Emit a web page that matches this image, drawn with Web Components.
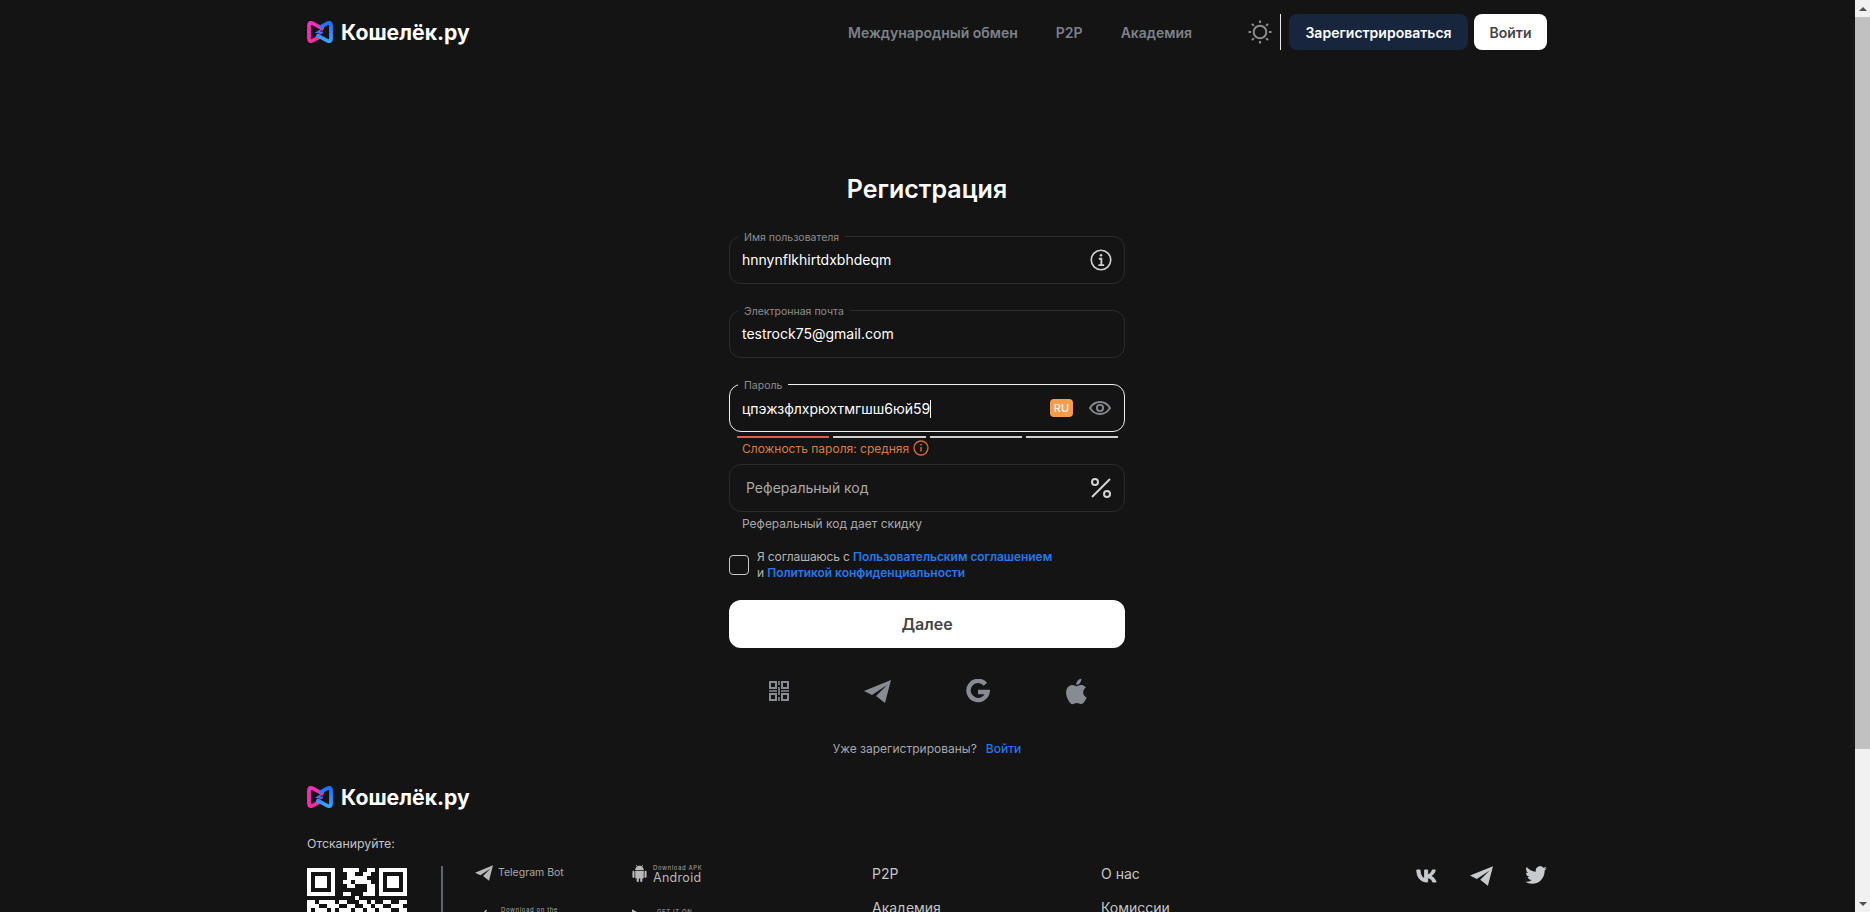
<!DOCTYPE html>
<html lang="ru">
<head>
<meta charset="utf-8">
<title>Кошелёк.ру</title>
<style>
	html, body { margin: 0; height: 100%; background: #141414; }
	body { font-family: Inter, "Noto Sans", sans-serif; color: #fff; overflow: hidden; }
</style>
</head>
<body>
<k-app>
	<k-header></k-header>
	<k-register></k-register>
	<k-footer></k-footer>
</k-app>

<script>
(function() {
	const ICONS = {
		sun: '<svg viewBox="0 0 24 24" fill="none" stroke="currentColor" stroke-width="2"><circle cx="12" cy="12" r="6.3"/><path d="M12 .5v2.6M12 20.9v2.6M.5 12h2.6M20.9 12h2.6M3.9 3.9l1.9 1.9M18.2 18.2l1.9 1.9M3.9 20.1l1.9-1.9M18.2 5.8l1.9-1.9"/></svg>',
		info: '<svg viewBox="0 0 24 24" fill="none" stroke="currentColor" stroke-width="1.8"><circle cx="12" cy="12" r="10.6"/><path d="M9.6 10.6H12.4V17.4M9.2 17.6H15.4" stroke-width="2"/><circle cx="12" cy="6.9" r="1.4" fill="currentColor" stroke="none"/></svg>',
		infoThin: '<svg viewBox="0 0 16 16" fill="none" stroke="currentColor" stroke-width="1.3"><circle cx="8" cy="8" r="7"/><path d="M8 7v4.6" stroke-width="1.4"/><circle cx="8" cy="4.7" r=".9" fill="currentColor" stroke="none"/></svg>',
		eye: '<svg viewBox="0 0 22 14" fill="none" stroke="currentColor" stroke-width="1.9"><path d="M1 7C3.4 3 6.8 1 11 1s7.6 2 10 6c-2.4 4-5.8 6-10 6S3.4 11 1 7z"/><circle cx="11" cy="7" r="3.1"/></svg>',
		percent: '<svg viewBox="0 0 20 20" fill="none" stroke="currentColor" stroke-width="2"><circle cx="4" cy="4" r="3"/><circle cx="16" cy="16" r="3"/><path d="M19 1L1 19"/></svg>',
		qr: '<svg viewBox="0 0 20 20" fill="none" stroke="currentColor" stroke-width="2"><rect x="1" y="1" width="6" height="6"/><rect x="13" y="1" width="6" height="6"/><rect x="1" y="13" width="6" height="6"/><rect x="13" y="13" width="6" height="6"/><path d="M10 0v4M10 6v8M10 16v4M0 10h8M12 10h8" stroke-width="1.6"/></svg>',
		telegram: '<svg viewBox="0 0 27 23" fill="currentColor"><polygon points="0,11 27,0 21,23 12,16 23,5 8,15"/></svg>',
		google: '<svg viewBox="0 0 24 24" fill="none" stroke="currentColor" stroke-width="4.4"><path d="M19.4 5.2A9.6 9.6 0 1 0 21.6 13H12"/></svg>',
		apple: '<svg viewBox="3 1.5 19 21" fill="currentColor"><path d="M18.71 19.5c-.83 1.24-1.71 2.45-3.05 2.47-1.34.03-1.77-.79-3.29-.79-1.53 0-2 .77-3.27.82-1.31.05-2.3-1.32-3.14-2.53C4.25 17 2.94 12.45 4.7 9.39c.87-1.52 2.43-2.48 4.12-2.51 1.28-.02 2.5.87 3.29.87.78 0 2.26-1.07 3.81-.91.65.03 2.47.26 3.64 1.98-.09.06-2.17 1.28-2.15 3.81.03 3.02 2.65 4.03 2.68 4.04-.03.07-.42 1.44-1.38 2.83M13 3.5c.73-.83 1.94-1.46 2.94-1.5.13 1.17-.34 2.35-1.04 3.19-.69.85-1.83 1.51-2.95 1.42-.15-1.15.41-2.35 1.05-3.11z"/></svg>',
		android: '<svg viewBox="2 0 20 24" fill="currentColor"><path d="M6 18c0 .55.45 1 1 1h1v3.5c0 .83.67 1.5 1.5 1.5s1.5-.67 1.5-1.5V19h2v3.5c0 .83.67 1.5 1.5 1.5s1.5-.67 1.5-1.5V19h1c.55 0 1-.45 1-1V8H6v10zM3.5 8C2.67 8 2 8.67 2 9.5v7c0 .83.67 1.5 1.5 1.5S5 17.33 5 16.5v-7C5 8.67 4.33 8 3.5 8zm17 0c-.83 0-1.5.67-1.5 1.5v7c0 .83.67 1.5 1.5 1.5s1.5-.67 1.5-1.5v-7c0-.83-.67-1.5-1.5-1.5zm-4.97-5.84l1.3-1.3c.2-.2.2-.51 0-.71-.2-.2-.51-.2-.71 0l-1.48 1.48C13.85 1.23 12.95 1 12 1c-.96 0-1.86.23-2.66.63L7.85.15c-.2-.2-.51-.2-.71 0-.2.2-.2.51 0 .71l1.31 1.31C6.97 3.26 6 5.01 6 7h12c0-1.99-.97-3.75-2.47-4.84z"/></svg>',
		play: '<svg viewBox="0 0 16 18" fill="currentColor"><polygon points="0,0 16,9 0,18"/></svg>',
		vk: '<svg viewBox="2.5 6 20 12" fill="currentColor" stroke="currentColor" stroke-width=".8"><path d="M12.8 17.5C6.8 17.5 3.3 13.4 3.2 6.5h3c.1 5 2.3 7.2 4.1 7.6V6.5h2.8v4.4c1.8-.2 3.6-2.2 4.2-4.4h2.8c-.5 2.7-2.5 4.7-3.9 5.5 1.4.7 3.7 2.4 4.6 5.5h-3.1c-.7-2.1-2.4-3.7-4.6-3.9v3.9h-.3z"/></svg>',
		twitter: '<svg viewBox="0 2 24 20" fill="currentColor"><path d="M23.953 4.57a10 10 0 01-2.825.775 4.958 4.958 0 002.163-2.723c-.951.555-2.005.959-3.127 1.184a4.92 4.92 0 00-8.384 4.482C7.69 8.095 4.067 6.13 1.64 3.162a4.822 4.822 0 00-.666 2.475c0 1.71.87 3.213 2.188 4.096a4.904 4.904 0 01-2.228-.616v.06a4.923 4.923 0 003.946 4.827 4.996 4.996 0 01-2.212.085 4.936 4.936 0 004.604 3.417 9.867 9.867 0 01-6.102 2.105c-.39 0-.779-.023-1.17-.067a13.995 13.995 0 007.557 2.209c9.053 0 13.998-7.496 13.998-13.985 0-.21 0-.42-.015-.63A9.935 9.935 0 0024 4.59z"/></svg>'
	};

	class KIcon extends HTMLElement {
		connectedCallback() {
			if (this.shadowRoot) return;
			const shadow = this.attachShadow({mode: 'open'});
			const w = this.getAttribute('w') || 20;
			const h = this.getAttribute('h') || w;
			shadow.innerHTML = `<style>
				:host { display: inline-flex; flex: none; width: ${w}px; height: ${h}px; }
				svg { width: 100%; height: 100%; display: block; }
			</style>${ICONS[this.getAttribute('name')] || ''}`;
		}
	}

	class KLogo extends HTMLElement {
		connectedCallback() {
			if (this.shadowRoot) return;
			const shadow = this.attachShadow({mode: 'open'});
			shadow.innerHTML = `<style>
				:host { display: inline-flex; align-items: center; gap: 8px; height: 24px; }
				svg { width: 26px; height: 22px; display: block; }
				span { font-size: 21.2px; font-weight: 700; color: #fff; line-height: 24px; }
			</style>
			<svg viewBox="0 0 26 22" fill="none">
				<defs>
					<linearGradient id="p" x1="0" y1="0" x2="1" y2="1"><stop offset="0" stop-color="#f02fc2"/><stop offset="1" stop-color="#f0308c"/></linearGradient>
					<linearGradient id="b" x1="0" y1="0" x2="0" y2="1"><stop offset="0" stop-color="#1f6fff"/><stop offset="1" stop-color="#38a3ff"/></linearGradient>
				</defs>
				<path d="M16.5 8.2L5.4 2.2Q2 .9 2 4.4V17.6Q2 21.1 5.4 19.8L13 15.6" stroke="url(#p)" stroke-width="3.8"/>
				<path d="M9.5 13.8L20.6 19.8Q24 21.1 24 17.6V4.4Q24 .9 20.6 2.2L13 6.4" stroke="url(#b)" stroke-width="3.8"/>
				<path d="M14.5 8.4L10.2 11.3H15.8L11.5 13.6" stroke="#5b63f5" stroke-width="1.6"/>
			</svg>
			<span>Кошелёк.ру</span>`;
		}
	}

	class KHeader extends HTMLElement {
		connectedCallback() {
			if (this.shadowRoot) return;
			const shadow = this.attachShadow({mode: 'open'});
			shadow.innerHTML = `<style>
				:host { display: flex; align-items: center; height: 64px; font-size: 14px; font-weight: 600; }
				nav { display: flex; gap: 38px; margin-left: auto; color: #7d8188; }
				.theme { display: flex; align-items: center; margin-left: 56px; color: #8c8c8c; }
				.sep { width: 1px; height: 36px; background: #e8e8e8; margin: 0 8px; }
				.btn { display: flex; align-items: center; justify-content: center; height: 36px; border-radius: 8px; box-sizing: border-box; }
				.reg { width: 179px; background: #17263d; color: #fff; }
				.login { width: 73px; background: #fff; color: #444; margin-left: 6px; }
			</style>
			<k-logo></k-logo>
			<nav><span>Международный обмен</span><span>P2P</span><span>Академия</span></nav>
			<div class="theme"><k-icon name="sun" w="24"></k-icon></div>
			<div class="sep"></div>
			<div class="btn reg">Зарегистрироваться</div>
			<div class="btn login">Войти</div>`;
		}
	}

	class KField extends HTMLElement {
		connectedCallback() {
			if (this.shadowRoot) return;
			const shadow = this.attachShadow({mode: 'open'});
			const label = this.getAttribute('label');
			const value = this.getAttribute('value') || '';
			const placeholder = this.getAttribute('placeholder');
			shadow.innerHTML = `<style>
				:host { display: flex; align-items: center; position: relative; box-sizing: border-box; height: 48px;
					padding: 0 12px 0 12px; border: 1px solid #2b2b2b; border-radius: 12px; font-size: 14px; color: #fff; }
				:host([focused]) { border-color: #f0f0f0; }
				.legend { position: absolute; left: 8px; top: -6px; padding: 0 6px; background: #141414;
					font-size: 10.5px; line-height: 13px; color: #8d8d8d; }
				.value { flex: 1; line-height: 20px; white-space: nowrap; }
				:host([focused]) .value { padding-top: 1px; }
				.value.ph { color: #a9a9a9; padding-left: 4px; }
				.caret { display: inline-block; width: 1px; height: 18px; background: #fff; vertical-align: -4px; }
				.end { display: flex; align-items: center; gap: 14px; margin-left: auto; }
			</style>
			${label ? `<div class="legend">${label}</div>` : ''}
			<div class="value ${placeholder ? 'ph' : ''}">${placeholder || value}${this.hasAttribute('focused') ? '<span class="caret"></span>' : ''}</div>
			<div class="end"><slot name="end"></slot></div>`;
		}
	}

	class KStrength extends HTMLElement {
		connectedCallback() {
			if (this.shadowRoot) return;
			const shadow = this.attachShadow({mode: 'open'});
			shadow.innerHTML = `<style>
				:host { display: block; }
				.bars { display: grid; grid-template-columns: repeat(4, 1fr); gap: 4px; margin: 0 7px 0 8px; }
				.bars i { height: 2px; background: #cfcfcf; }
				.bars i:first-child { background: #e5574f; }
				.note { display: flex; align-items: center; gap: 4px; margin: 1px 0 0 13px; height: 18px; font-size: 12px; color: #dc7b3c; }
				.note k-icon { color: #e0663c; }
			</style>
			<div class="bars"><i></i><i></i><i></i><i></i></div>
			<div class="note">Сложность пароля: средняя <k-icon name="infoThin" w="16"></k-icon></div>`;
		}
	}

	class KAgree extends HTMLElement {
		connectedCallback() {
			if (this.shadowRoot) return;
			const shadow = this.attachShadow({mode: 'open'});
			shadow.innerHTML = `<style>
				:host { display: flex; align-items: center; gap: 8px; font-size: 12px; line-height: 16px; color: #b4b4b4; }
				.box { width: 20px; height: 20px; box-sizing: border-box; border: 1px solid #c8c8c8; border-radius: 4px; flex: none; }
				.txt { letter-spacing: -.12px; }
				a { color: #2479ea; font-weight: 600; text-decoration: none; letter-spacing: -.05px; }
			</style>
			<div class="box"></div>
			<div class="txt">Я соглашаюсь с <a>Пользовательским соглашением</a><br>и <a>Политикой конфиденциальности</a></div>`;
		}
	}

	class KRegister extends HTMLElement {
		connectedCallback() {
			if (this.shadowRoot) return;
			const shadow = this.attachShadow({mode: 'open'});
			shadow.innerHTML = `<style>
				:host { display: block; width: 396px; margin: 0 auto; padding-top: 109px; }
				h1 { margin: 0 0 31px; font-size: 25px; line-height: 32px; font-weight: 600; text-align: center; color: #fff; }
				k-field + k-field { margin-top: 26px; }
				k-strength { margin-top: 4px; }
				.ref { margin-top: 7px; }
				.hint { margin: 4px 0 0 13px; font-size: 12px; line-height: 16px; color: #a9a9a9; }
				k-agree { margin-top: 17px; }
				.next { display: flex; align-items: center; justify-content: center; height: 48px; margin-top: 19px;
					background: #fff; border-radius: 12px; color: #444; font-size: 16px; font-weight: 600; }
				.socials { display: flex; align-items: center; height: 28px; margin-top: 29px; color: #888b91; }
				.socials k-icon:nth-child(1) { margin-left: 40px; }
				.socials k-icon:nth-child(2) { margin-left: 75px; }
				.socials k-icon:nth-child(3) { margin-left: 75px; }
				.socials k-icon:nth-child(4) { margin-left: 75px; }
				.have { display: flex; justify-content: center; gap: 9px; margin-top: 36px; font-size: 12px; line-height: 16px; color: #a4a8ae; }
				.have a { color: #2479ea; font-weight: 500; }
				.ru { display: flex; align-items: center; justify-content: center; width: 23px; height: 18px; border-radius: 4px;
					background: #f59d4b; color: #f3f3f3; font-size: 11px; font-weight: 500; }
			</style>
			<h1>Регистрация</h1>
			<k-field label="Имя пользователя" value="hnnynflkhirtdxbhdeqm">
				<k-icon slot="end" name="info" w="22"  style="color:#d0d0d0"></k-icon>
			</k-field>
			<k-field label="Электронная почта" value="testrock75@gmail.com"></k-field>
			<k-field label="Пароль" value="цпэжзфлхрюхтмгшш6юй59" focused>
				<span slot="end" class="ru">RU</span>
				<k-icon slot="end" name="eye" w="22" h="14" style="color:#85888e;margin-left:2px;margin-right:1px"></k-icon>
			</k-field>
			<k-strength></k-strength>
			<k-field class="ref" placeholder="Реферальный код">
				<k-icon slot="end" name="percent" w="20" style="color:#d4d4d4;margin-right:1px"></k-icon>
			</k-field>
			<div class="hint">Реферальный код дает скидку</div>
			<k-agree></k-agree>
			<div class="next">Далее</div>
			<div class="socials">
				<k-icon name="qr" w="20"></k-icon>
				<k-icon name="telegram" w="27" h="23"></k-icon>
				<k-icon name="google" w="24"></k-icon>
				<k-icon name="apple" w="24" h="27"></k-icon>
			</div>
			<div class="have"><span>Уже зарегистрированы?</span><a>Войти</a></div>`;
		}
	}

	// qr is cut by the fold, only the rows that show are listed
	const QR_ROWS = [
		'1111111001111001101111111',
		'1000001000110011001000001',
		'1011101000111110001011101',
		'1011101001101111001011101',
		'1011101000110001101011101',
		'1000001000000001101000001',
		'1111111001100011101111111',
		'0000000000001000000000000',
		'1101111011000110100110011',
		'1110011100110011011001110',
		'1011101011101101101110011',
		'0110110110011100110101101',
		'1101011011110011011010110'
	];

	class KQr extends HTMLElement {
		connectedCallback() {
			if (this.shadowRoot) return;
			const shadow = this.attachShadow({mode: 'open'});
			let rects = '';
			QR_ROWS.forEach((row, y) => {
				[...row].forEach((c, x) => {
					if (c === '1') rects += `<rect x="${x}" y="${y}" width="1" height="1"/>`;
				});
			});
			shadow.innerHTML = `<style>
				:host { display: block; width: 100px; height: 100px; }
				svg { display: block; width: 100px; height: 100px; }
			</style><svg viewBox="0 0 25 25" fill="#fff" shape-rendering="crispEdges">${rects}</svg>`;
		}
	}

	class KFooter extends HTMLElement {
		connectedCallback() {
			if (this.shadowRoot) return;
			const shadow = this.attachShadow({mode: 'open'});
			shadow.innerHTML = `<style>
				:host { display: block; margin-top: 28px; color: #c8c8c8; }
				.scan { margin-top: 24px; font-size: 12.3px; line-height: 16px; color: #c4c4c4; }
				.row { display: flex; margin-top: 16px; }
				.qr { width: 134px; flex: none; }
				.line { width: 2px; height: 130px; background: #5f6672; margin-top: -2px; flex: none; }
				.stores { display: grid; grid-template-columns: 157px 240px; grid-auto-rows: 42px; margin-left: 32px; margin-top: -3px; color: #b8b8b8; flex: none; }
				.store { display: flex; align-items: flex-start; gap: 5px; }
				.tg { font-size: 10.5px; line-height: 16px; color: #a8a8a8; }
				.two { display: flex; flex-direction: column; }
				.two small { font-size: 6px; line-height: 6px; letter-spacing: .6px; color: #a8a8a8; }
				.two b { font-size: 12.5px; line-height: 13px; font-weight: 400; letter-spacing: .3px; color: #b8b8b8; }
				.links { width: 229px; flex: none; font-size: 14px; line-height: 20px; color: #c6c6c6; margin-top: -4px; }
				.links div + div { margin-top: 14px; }
				.social { display: flex; gap: 32px; margin-left: auto; align-items: flex-start; color: #c8cbce; margin-top: -2px; }
			</style>
			<k-logo></k-logo>
			<div class="scan">Отсканируйте:</div>
			<div class="row">
				<div class="qr"><k-qr></k-qr></div>
				<div class="line"></div>
				<div class="stores">
					<div class="store"><k-icon name="telegram" w="18" h="16"></k-icon><span class="tg">Telegram Bot</span></div>
					<div class="store"><k-icon name="android" w="15" h="17" style="margin-right:1px"></k-icon><div class="two"><small>Download APK</small><b>Android</b></div></div>
					<div class="store"><k-icon name="apple" w="13" h="15" style="margin:2px 5px 0 3px"></k-icon><div class="two"><small>Download on the</small></div></div>
					<div class="store"><k-icon name="play" w="12" h="14" style="margin:2px 8px 0 0"></k-icon><div class="two"><small style="padding-top:2px">GET IT ON</small></div></div>
				</div>
				<div class="links"><div>P2P</div><div>Академия</div></div>
				<div class="links"><div>О нас</div><div>Комиссии</div></div>
				<div class="social">
					<k-icon name="vk" w="22" h="14" style="margin-top:3px"></k-icon>
					<k-icon name="telegram" w="23" h="20"></k-icon>
					<k-icon name="twitter" w="22" h="18"></k-icon>
				</div>
			</div>`;
		}
	}

	class KApp extends HTMLElement {
		connectedCallback() {
			if (this.shadowRoot) return;
			const shadow = this.attachShadow({mode: 'open'});
			shadow.innerHTML = `<style>
				:host { display: grid; grid-template-columns: 1fr 15px; height: 100vh; overflow: hidden; }
				.page { overflow: hidden; min-width: 0; padding-right: 1px; }
				.wrap { width: 1240px; margin: 0 auto; }
				.bar { display: flex; flex-direction: column; background: #f1f1f1; }
				.arrow { height: 17px; display: flex; align-items: center; justify-content: center; }
				.arrow i { border: 4px solid transparent; }
				.up i { border-bottom: 4px solid #505050; border-top: 0; }
				.down i { border-top: 4px solid #505050; border-bottom: 0; }
				.thumb { height: 732px; background: #c1c1c1; }
				.rest { flex: 1; }
			</style>
			<div class="page"><div class="wrap"><slot></slot></div></div>
			<div class="bar">
				<div class="arrow up"><i></i></div>
				<div class="thumb"></div>
				<div class="rest"></div>
				<div class="arrow down"><i></i></div>
			</div>`;
		}
	}

	customElements.define('k-icon', KIcon);
	customElements.define('k-logo', KLogo);
	customElements.define('k-header', KHeader);
	customElements.define('k-field', KField);
	customElements.define('k-strength', KStrength);
	customElements.define('k-agree', KAgree);
	customElements.define('k-register', KRegister);
	customElements.define('k-qr', KQr);
	customElements.define('k-footer', KFooter);
	customElements.define('k-app', KApp);
})();
</script>
</body>
</html>
